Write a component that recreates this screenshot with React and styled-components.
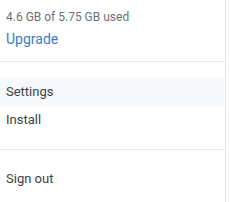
import React from "react";
import styled, { createGlobalStyle } from "styled-components";

const Global = createGlobalStyle`
  html, body { margin: 0; padding: 0; background: #fff; }
  body { font-family: Roboto, "Liberation Sans", sans-serif; }
`;

const Menu = styled.div`
  width: 226px;
  height: 202px;
  border-right: 1px solid #e8e9eb;
  box-sizing: border-box;
  display: flex;
  flex-direction: column;
  background: #fff;
`;

const Section = styled.div`
  display: flex;
  flex-direction: column;
  padding: ${(p) => p.$pad || "0"};
  border-bottom: ${(p) => (p.$divider ? "1px solid #e6e8eb" : "none")};
`;

const Usage = styled.div`
  font-size: 12px;
  color: #6b7178;
  line-height: 16px;
  padding: 9px 6px 0;
`;

const Upgrade = styled.a`
  font-size: 14px;
  line-height: 18px;
  color: #3b7dc4;
  padding: 5px 6px 0;
  text-decoration: none;
`;

const Item = styled.div`
  font-size: 13px;
  line-height: 28px;
  height: 28px;
  padding: 0 6px;
  color: #3d4247;
  background: ${(p) => (p.$active ? "#f6f8fa" : "transparent")};
`;

export default function App() {
  return (
    <>
      <Global />
      <Menu>
        <Section $divider $pad="0 0 13px">
          <Usage>4.6 GB of 5.75 GB used</Usage>
          <Upgrade>Upgrade</Upgrade>
        </Section>
        <Section $divider $pad="16px 0 15px">
          <Item $active>Settings</Item>
          <Item>Install</Item>
        </Section>
        <Section $pad="15px 0 0">
          <Item>Sign out</Item>
        </Section>
      </Menu>
    </>
  );
}
